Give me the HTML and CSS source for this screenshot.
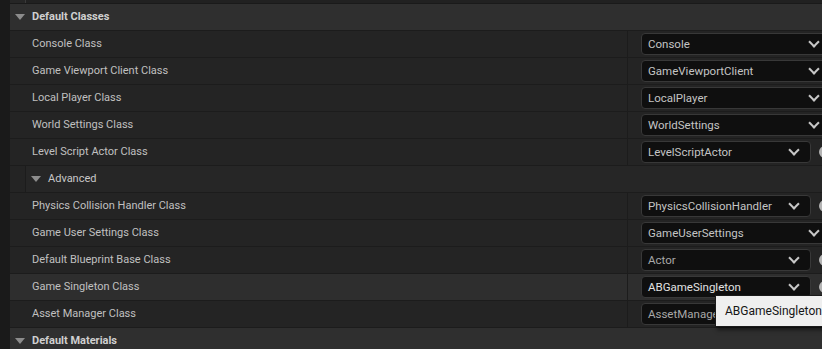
FILE: index.html
```html
<!DOCTYPE html>
<html lang="en">
<head>
    <meta charset="UTF-8">
    <title>Project Settings - Default Classes</title>
    <link rel="stylesheet" href="styles.css">
</head>
<body>
    <div class="details">
        <div class="details__top"><span class="details__top-indent"></span><span class="details__top-rest"></span></div>

        <div class="category">
            <span class="arrow"></span>
            <span class="category__title">Default Classes</span>
        </div>

        <div class="row">
            <div class="row__name">Console Class</div>
            <div class="row__value"><div class="combo combo--wide"><span>Console</span><span class="chevron"></span></div></div>
        </div>
        <div class="row">
            <div class="row__name">Game Viewport Client Class</div>
            <div class="row__value"><div class="combo combo--wide"><span>GameViewportClient</span><span class="chevron"></span></div></div>
        </div>
        <div class="row">
            <div class="row__name">Local Player Class</div>
            <div class="row__value"><div class="combo combo--wide"><span>LocalPlayer</span><span class="chevron"></span></div></div>
        </div>
        <div class="row">
            <div class="row__name">World Settings Class</div>
            <div class="row__value"><div class="combo combo--wide"><span>WorldSettings</span><span class="chevron"></span></div></div>
        </div>
        <div class="row">
            <div class="row__name">Level Script Actor Class</div>
            <div class="row__value"><div class="combo"><span>LevelScriptActor</span><span class="chevron"></span></div><span class="reset"></span></div>
        </div>

        <div class="subgroup">
            <div class="subgroup__inner">
                <span class="arrow"></span>
                <span class="subgroup__title">Advanced</span>
            </div>
        </div>

        <div class="row">
            <div class="row__name">Physics Collision Handler Class</div>
            <div class="row__value"><div class="combo"><span>PhysicsCollisionHandler</span><span class="chevron"></span></div><span class="reset"></span></div>
        </div>
        <div class="row">
            <div class="row__name">Game User Settings Class</div>
            <div class="row__value"><div class="combo combo--wide"><span>GameUserSettings</span><span class="chevron"></span></div></div>
        </div>
        <div class="row">
            <div class="row__name">Default Blueprint Base Class</div>
            <div class="row__value"><div class="combo combo--dim"><span>Actor</span><span class="chevron"></span></div><span class="reset"></span></div>
        </div>
        <div class="row row--hover">
            <div class="row__name">Game Singleton Class</div>
            <div class="row__value"><div class="combo combo--bright"><span>ABGameSingleton</span><span class="chevron"></span></div><span class="reset"></span></div>
        </div>
        <div class="row">
            <div class="row__name">Asset Manager Class</div>
            <div class="row__value"><div class="combo combo--dim"><span>AssetManager</span><span class="chevron"></span></div><span class="reset"></span></div>
        </div>

        <div class="category">
            <span class="arrow"></span>
            <span class="category__title">Default Materials</span>
        </div>

        <div class="tooltip">ABGameSingleton</div>
    </div>
</body>
</html>
```

FILE: styles.css
```css
body {
    margin: 0;
    background-color: #1a1a1a;
    font-family: 'Roboto', 'Liberation Sans', sans-serif;
    font-size: 11px;
    color: #c0c0c0;
    overflow: hidden;
    width: 822px;
    height: 349px;
}

.details {
    position: relative;
    margin-left: 10px;
    width: 812px;
    overflow: hidden;
    height: 349px;
}

.details__top {
    display: flex;
    height: 3px;
    border-bottom: 1px solid #1a1a1a;
}

.details__top-indent {
    width: 15px;
    background-color: #262626;
    border-right: 1px solid #3a3a3a;
}

.details__top-rest {
    flex: 1;
    background-color: #212121;
}

.arrow {
    width: 0;
    height: 0;
    border-left: 5px solid transparent;
    border-right: 5px solid transparent;
    border-top: 6px solid #8c8c8c;
}

.category {
    box-sizing: border-box;
    display: flex;
    align-items: center;
    height: 27px;
    padding: 0 0 1px 5px;
    background-color: #2f2f2f;
    border-bottom: 1px solid #1c1c1c;
}

.category__title {
    margin-left: 7px;
    font-weight: bold;
    color: #cfcfcf;
}

.row {
    display: grid;
    grid-template-columns: 618px 1fr;
    height: 26px;
    background-color: #242424;
    border-bottom: 1px solid #1c1c1c;
}

.row--hover {
    background-color: #2e2e2e;
}

.row__name {
    display: flex;
    align-items: center;
    padding: 0 0 1px 22px;
    border-right: 1px solid #1c1c1c;
}

.row__value {
    display: flex;
    align-items: center;
    padding-left: 13px;
    gap: 8px;
}

.combo {
    box-sizing: border-box;
    display: flex;
    align-items: center;
    justify-content: space-between;
    flex-shrink: 0;
    width: 170px;
    height: 22px;
    padding: 0 12px 1px 6px;
    font-size: 11.5px;
    background-color: #0f0f0f;
    border: 1px solid #383838;
    border-radius: 4px;
    color: #c4c4c4;
}

.combo--wide {
    width: 190px;
}

.combo--dim {
    color: #a8a8a8;
}

.combo--bright {
    color: #e2e2e2;
}

.chevron {
    width: 6px;
    height: 6px;
    margin-top: -4px;
    border-right: 2px solid #c8c8c8;
    border-bottom: 2px solid #c8c8c8;
    transform: rotate(45deg);
}

.reset {
    flex-shrink: 0;
    width: 12px;
    height: 12px;
    border-radius: 50%;
    background-color: #b4b4b4;
}

.subgroup {
    height: 26px;
    padding-left: 15px;
    background-color: #242424;
    border-bottom: 1px solid #1c1c1c;
}

.subgroup__inner {
    box-sizing: border-box;
    display: flex;
    align-items: center;
    height: 100%;
    padding: 0 0 1px 5px;
    background-color: #262626;
    border-left: 1px solid #1c1c1c;
}

.subgroup__title {
    margin-left: 7px;
    color: #c8c8c8;
}

.tooltip {
    position: absolute;
    left: 705px;
    top: 295px;
    box-sizing: border-box;
    width: 130px;
    height: 32px;
    padding-left: 9px;
    line-height: 30px;
    font-size: 12px;
    color: #161616;
    background-color: #efefef;
    border: 1px solid #1a1a1a;
    box-shadow: 2px 3px 4px rgba(0, 0, 0, 0.5);
}
```
